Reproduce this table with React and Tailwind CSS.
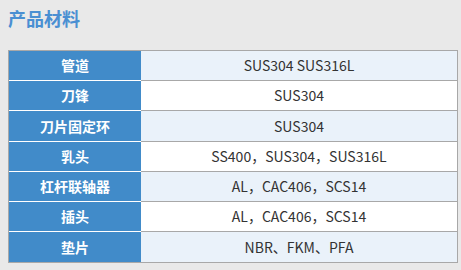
import React from 'react'

const rows = [
    { name: '管道', value: 'SUS304 SUS316L', h: 'h-[30px]' },
    { name: '刀锋', value: 'SUS304', h: 'h-[30px]' },
    { name: '刀片固定环', value: 'SUS304', h: 'h-[31px]' },
    { name: '乳头', value: 'SS400，SUS304，SUS316L', h: 'h-[30px]' },
    { name: '杠杆联轴器', value: 'AL，CAC406，SCS14', h: 'h-[30px]' },
    { name: '插头', value: 'AL，CAC406，SCS14', h: 'h-[30px]' },
    { name: '垫片', value: 'NBR、FKM、PFA', h: 'h-[30px]' },
]

const App = () => {
    return (
        <div className="w-[461px] h-[270px] bg-[#e9e9e9] px-2 pt-[6px] font-['Noto_Sans_CJK_SC',sans-serif]">
            <h2 className="text-[18px] leading-[24px] font-bold text-[#4a8fd2]">产品材料</h2>

            <div className="mt-[20px] w-[450px] border border-[#a8a8a8]">
                {rows.map((row, idx) => (
                    <div
                        key={idx}
                        className={`flex ${row.h} ${idx < rows.length - 1 ? 'border-b border-[#a8a8a8]' : ''}`}
                    >
                        <div
                            className={`w-[132px] flex items-center justify-center bg-[#418bc9] text-white text-[14px] font-bold ${
                                idx < rows.length - 1 ? 'border-b border-white -mb-px' : ''
                            }`}
                        >
                            {row.name}
                        </div>
                        <div
                            className={`flex-1 flex items-center justify-center text-[14px] text-[#333] ${
                                idx % 2 === 0 ? 'bg-[#eaf2fa]' : 'bg-white'
                            }`}
                        >
                            {row.value}
                        </div>
                    </div>
                ))}
            </div>
        </div>
    )
}

export default App
